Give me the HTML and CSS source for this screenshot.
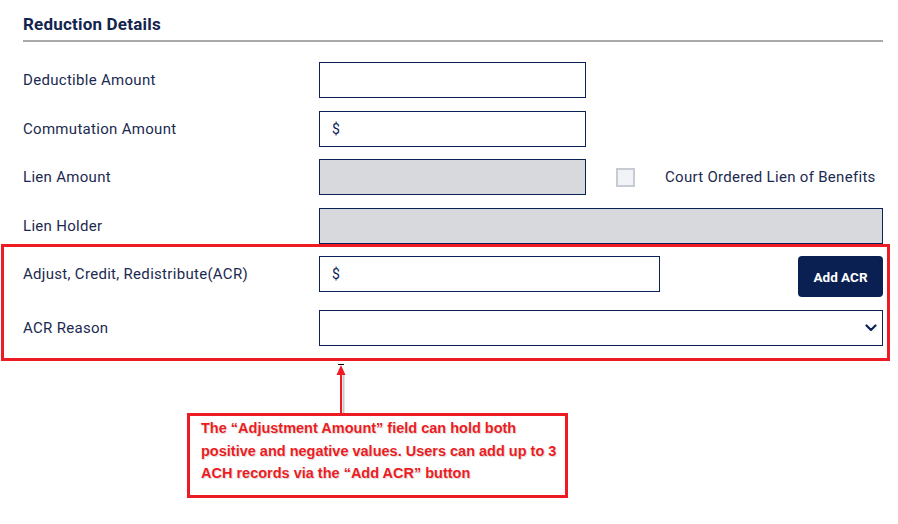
FILE: index.html
```html
<!DOCTYPE html>
<html lang="en">
<head>
  <meta charset="UTF-8">
  <meta name="viewport" content="width=device-width, initial-scale=1.0">
  <title>Reduction Details</title>
  <link rel="stylesheet" href="styles.css">
</head>
<body>
  <div class="page">
    <h2 class="section-title">Reduction Details</h2>

    <div class="row">
      <label class="label">Deductible Amount</label>
      <div class="field short"></div>
    </div>

    <div class="row">
      <label class="label">Commutation Amount</label>
      <div class="field short"><span class="prefix">$</span></div>
    </div>

    <div class="row">
      <label class="label">Lien Amount</label>
      <div class="field short disabled"></div>
      <span class="checkbox"></span>
      <span class="check-label">Court Ordered Lien of Benefits</span>
    </div>

    <div class="row">
      <label class="label">Lien Holder</label>
      <div class="field wide disabled"></div>
    </div>

    <div class="highlight">
      <div class="row row-acr">
        <label class="label">Adjust, Credit, Redistribute(ACR)</label>
        <div class="field mid"><span class="prefix">$</span></div>
        <button class="btn">Add ACR</button>
      </div>
      <div class="row">
        <label class="label">ACR Reason</label>
        <div class="field wide select">
          <svg class="chevron" width="12" height="8" viewBox="0 0 12 8">
            <path d="M1.5 1.5 L6 6 L10.5 1.5" fill="none" stroke="#0b2257" stroke-width="2.2" stroke-linecap="round" stroke-linejoin="round"/>
          </svg>
        </div>
      </div>
    </div>

    <div class="note">
      <svg class="arrow" width="14" height="52" viewBox="0 0 14 52">
        <line x1="3" y1="3.5" x2="9" y2="3.5" stroke="#000" stroke-width="1"/>
        <line x1="7" y1="12" x2="7" y2="52" stroke="#c9c9c9" stroke-width="2" transform="translate(1.5,1)"/>
        <line x1="6" y1="12" x2="6" y2="52" stroke="#ed1c24" stroke-width="2"/>
        <polygon points="6,4 10.5,14 1.5,14" fill="#ed1c24"/>
      </svg>
      <div class="callout">
        The “Adjustment Amount” field can hold both<br>
        positive and negative values. Users can add up to 3<br>
        ACH records via the “Add ACR” button
      </div>
    </div>
  </div>
</body>
</html>
```

FILE: styles.css
```css
body {
  margin: 0;
  background: #fff;
  font-family: Roboto, "Noto Sans", sans-serif;
  color: #1b2a50;
}
.page {
  width: 860px;
  padding: 0 15px 0 23px;
}
.section-title {
  margin: 0 0 20px;
  padding: 14px 0 6px;
  font-size: 17px;
  line-height: 20px;
  letter-spacing: 0.2px;
  font-weight: 700;
  color: #13244e;
  border-bottom: 2px solid #a9a9a9;
}
.row {
  display: flex;
  align-items: center;
  margin-bottom: 12.7px;
}
.label {
  width: 296px;
  flex-shrink: 0;
  font-size: 15px;
  letter-spacing: 0.3px;
  color: #1b2a50;
}
.field {
  box-sizing: border-box;
  height: 36px;
  border: 1.5px solid #0b2257;
  background: #fff;
  display: flex;
  align-items: center;
  padding: 0 12px;
}
.field.short { width: 267px; }
.field.mid { width: 341px; }
.field.wide { flex: 1; }
.field.disabled { background: #d7d9dc; }
.prefix {
  font-size: 14px;
  color: #0b2257;
}
.checkbox {
  box-sizing: border-box;
  width: 19px;
  height: 19px;
  margin-left: 30px;
  border: 2px solid #c6cbd4;
  background: #f1f3f6;
}
.check-label {
  margin-left: 30px;
  font-size: 15px;
  letter-spacing: 0.3px;
  color: #1b2a50;
}
.highlight {
  margin: -12.7px -7px 0 -22px;
  padding: 9px 4px 0 19px;
  border: 3px solid #ed1c24;
}
.row-acr {
  align-items: flex-start;
}
.row-acr .label {
  line-height: 36px;
}
.btn {
  margin-left: auto;
  width: 85px;
  height: 41px;
  border: none;
  border-radius: 4px;
  background: #0a2052;
  color: #fff;
  font-family: Roboto, sans-serif;
  font-size: 13.5px;
  font-weight: 700;
}
.select {
  justify-content: flex-end;
  padding-right: 5px;
}
.note {
  display: flex;
  flex-direction: column;
}
.arrow {
  display: block;
  margin-left: 312px;
}
.callout {
  box-sizing: border-box;
  width: 381px;
  height: 85px;
  margin-left: 164px;
  padding: 1px 0 0 11px;
  border: 3px solid #ed1c24;
  white-space: nowrap;
  font-family: "Liberation Sans", Arial, sans-serif;
  font-weight: 700;
  font-size: 14.5px;
  line-height: 22.5px;
  color: #ed1c24;
  text-shadow: 1px 1px 1px rgba(0,0,0,0.15);
}
```
